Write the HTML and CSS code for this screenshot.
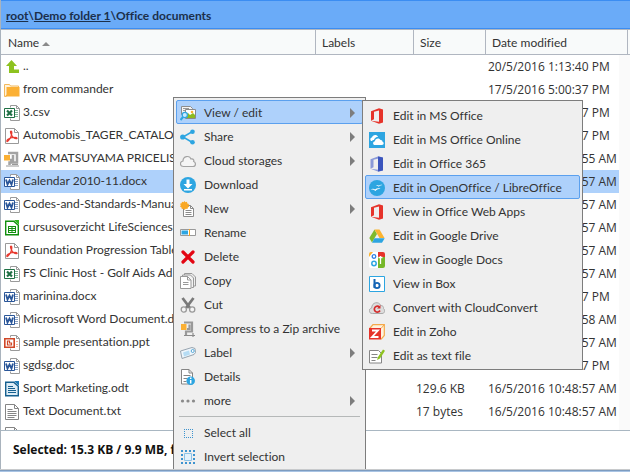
FILE: index.html
```
<!DOCTYPE html>
<html lang="en">
<head>
<meta charset="utf-8">
<title>Office documents</title>
<link rel="stylesheet" href="styles.css">
</head>
<body>
<svg class="sprite" aria-hidden="true">
  <defs>
    <g id="sheet"><path d="M6.5 2.500V.5h6l3 3v12h-9v-2" fill="#fff" stroke="#9a9a9a"/><path d="M12.500.5v3h3" fill="none" stroke="#9a9a9a"/></g>
    <symbol id="up" viewBox="0 0 16 16"><path d="M7.500 1 13 7H10v3.500h5V14H5V7H2z" fill="#8dc21f"/></symbol>
    <symbol id="folder" viewBox="0 0 16 16"><path d="M.5 14V2.500h5l1 1.500h8v2" fill="#fff3dc" stroke="#f3b85a"/><path d="M2.500 5h13v9.500H.8l1.700-2z" fill="#fbb034"/><path d="M.5 5v9.500h2" fill="none" stroke="#f3b85a"/></symbol>
    <symbol id="excel" viewBox="0 0 16 16"><use href="#sheet"/><path d="M11 5.500h3M11 7.500h3M11 9.500h3M11 11.500h3" stroke="#7fb596"/><path d="M.5 3.500h10v9H.5z" fill="#fff" stroke="#1f7145"/><path d="m3 5.500 5 5m0-5-5 5" stroke="#1f7145" stroke-width="2.200"/></symbol>
    <symbol id="word" viewBox="0 0 16 16"><use href="#sheet"/><path d="M11 5.500h3M11 7.500h3M11 9.500h3M11 11.500h3" stroke="#8aa0c0"/><path d="M.5 3.500h10v9H.5z" fill="#fff" stroke="#2a5699"/><path d="m2 5.500 1.500 5 2-4 2 4 1.500-5" fill="none" stroke="#2a5699" stroke-width="1.800"/></symbol>
    <symbol id="ppt" viewBox="0 0 16 16"><use href="#sheet"/><path d="M12 6.500h2M12 9.500h2M12 11.500h2" stroke="#f0b49c"/><path d="M.8 3.800h9.400v8.400H.8z" fill="#fff" stroke="#d04727" stroke-width="1.600"/><path d="M5.500 6h-2v4h4V8h-2z" fill="none" stroke="#d04727" stroke-width="1.200"/></symbol>
    <symbol id="pdf" viewBox="0 0 16 16"><path d="M1.500.5h9l4 4v11h-13z" fill="#fff" stroke="#999"/><path d="M10.500.5v4h4" fill="none" stroke="#999"/><path d="M7 3c-1.500 0 .5 5 2.500 6.500s4 1.500 3.500.5-5-.5-7.500.5S2.500 13 3 13.500 6 11 7 8.500 8.200 3 7 3z" fill="none" stroke="#e8392e" stroke-width="1.200"/></symbol>
    <symbol id="zip" viewBox="0 0 16 16"><path d="M4 2h9v9.500H5.500V14M9 4v5H6" fill="none" stroke="#a3a3a3" stroke-width="2.500"/><path d="M2 15h13M8 13.500h6" stroke="#999" stroke-width="1.200"/><path d="M0 4h6v5.500H0z" fill="#fbb034"/></symbol>
    <symbol id="calc" viewBox="0 0 16 16"><path d="M1.700 1.200h8l4.600 4v9.600H1.700z" fill="#fff" stroke="#12900f" stroke-width="1.400"/><path d="M10 0h5v5z" fill="#31b51f"/><path d="M4 6h8v7H4z" fill="#12900f"/><path d="M5 7.500h2.500M8.500 7.500H11M5 9.500h2.500m1 0H11M5 11.500h2.500m1 0H11" stroke="#fff"/></symbol>
    <symbol id="odt" viewBox="0 0 16 16"><path d="M1.700 1.200h8l4.600 4v9.600H1.700z" fill="#dcecf6" stroke="#16608f" stroke-width="1.400"/><path d="M10 0h5v5z" fill="#1e7ab4"/><path d="M4 5.500h5M4 7.500h7M4 9.500h8M4 11.500h8" stroke="#16608f"/></symbol>
    <symbol id="txt" viewBox="0 0 16 16"><path d="M1.500.5h9l4 4v11h-13z" fill="#fff" stroke="#858585"/><path d="M10.500.5v4h4M3.500 5.500h5M3.500 7.500h9M3.500 9.500h9M3.500 11.500h9M3.500 13.500h7" fill="none" stroke="#858585"/></symbol>

    <symbol id="view" viewBox="0 0 16 16"><path d="M1.500 1.500h9l2 2v6h-11z" fill="#f5f5f5" stroke="#8d8d8d"/><path d="M3 3.500h6M3 5.500h2" stroke="#999"/><path d="M5.500 4.500h10v9h-10z" fill="#fff" stroke="#8a8a8a"/><path d="M6 13V9l2-1 2 2 3-2 2 2v3z" fill="#8cbb1e"/><circle cx="12" cy="7" r="1.300" fill="#f9b233"/><circle cx="4.800" cy="10" r="2.600" fill="#c9eaff" stroke="#2da5e1" stroke-width="1.200"/><path d="m.5 15 2.500-3" stroke="#2da5e1" stroke-width="2"/></symbol>
    <symbol id="share" viewBox="0 0 16 16"><path d="M12.500 2.500 3 8l9.500 5.500" fill="none" stroke="#2da5e1" stroke-width="1.500"/><circle cx="12.500" cy="2.700" r="2.300" fill="#2da5e1"/><circle cx="2.700" cy="8" r="2.600" fill="#2da5e1"/><circle cx="12.500" cy="13.300" r="2.300" fill="#2da5e1"/></symbol>
    <symbol id="cloud" viewBox="0 0 16 16"><path d="M3.500 13.500C-.5 13.500-.5 8.500 3 8c0-5 6.500-6 8-2 3-.5 3 2 2.700 2.500 2.500 1 2.300 5-.7 5z" fill="#f5f5f5" stroke="#a3a3a3" stroke-width="1.200"/></symbol>
    <symbol id="download" viewBox="0 0 16 16"><circle cx="8" cy="8" r="8" fill="#2da5e1"/><path d="M6.500 2.500h3V7h3L8 11.500 3.500 7h3zM4 12h8v1.500H4z" fill="#fff"/></symbol>
    <symbol id="new" viewBox="0 0 16 16"><path d="M3.500 4.500h7l3 3v8h-10z" fill="#fff" stroke="#8a8a8a"/><path d="M10.500 4.500v3h3M5.500 9.500h6M5.500 11.500h6M5.500 13.500h6" fill="none" stroke="#8a8a8a"/><path d="m4.500 0 1 1.300L7 .8l.3 1.700 1.700.5-.6 1.500 1 1.200-1.600.8L7.500 8l-1.700-.3L4.500 9l-1-1.300L1.800 8l-.3-1.600L0 5.600l.8-1.400L0 2.800l1.600-.5L2 .8l1.500.5z" fill="#f9a825"/></symbol>
    <symbol id="rename" viewBox="0 0 16 16"><path d="M.5 4.500h15v6H.5z" fill="#fff" stroke="#999"/><path d="M1.500 5.500H8v4H1.500z" fill="#2da5e1"/><path d="M9.500 4v7" stroke="#f5a623"/></symbol>
    <symbol id="delete" viewBox="0 0 16 16"><path d="m3 3 10 10M13 3 3 13" stroke="#e30613" stroke-width="3.200" stroke-linecap="round"/></symbol>
    <symbol id="copy" viewBox="0 0 16 16"><path d="M4.500 3V.5H12l3.500 3.500v9h-2" fill="#eee" stroke="#999"/><path d="M2.500 4V2h8l3 3v9.500h-2" fill="#f3f3f3" stroke="#999"/><path d="M.5 3.500h7l3.500 3.500v8.500H.5z" fill="#fff" stroke="#999"/><path d="M7.500 3.500V7H11M3 9.500h5.500M3 11.500h5.500" fill="none" stroke="#999"/></symbol>
    <symbol id="cut" viewBox="0 0 16 16"><path d="m2.500 1 7.500 10M13.500 1 6 11" stroke="#7a7a7a" stroke-width="2.800"/><circle cx="3.800" cy="12.500" r="2.600" fill="#f5f5f5" stroke="#999" stroke-width="1.300"/><circle cx="12.200" cy="12.500" r="2.600" fill="#f5f5f5" stroke="#999" stroke-width="1.300"/></symbol>
    <symbol id="compress" viewBox="0 0 16 16"><path d="M4 1.500h8v9H6V14M9.500 3.500V8H7" fill="none" stroke="#999" stroke-width="2.200"/><path d="M4 14.500h11M13 12v4" stroke="#8a8a8a" stroke-width="1.200"/><path d="M1 3h5.500v6H1z" fill="#fbb034"/></symbol>
    <symbol id="label" viewBox="0 0 16 16"><path d="M.5 6 12 2.500l3 1 .5 4-1.500 2L2 13.500z" fill="#eef6fc" stroke="#97a4af"/><path d="m3 7.500 6-2 1 4-6 2z" fill="#b5dcf4"/><circle cx="12.700" cy="6" r="1.500" fill="#fff" stroke="#58a9d8"/></symbol>
    <symbol id="details" viewBox="0 0 16 16"><path d="M1.500.5H9L12.500 4v11h-11z" fill="#fff" stroke="#858585"/><path d="M9 .5V4h3.500M3.500 6.500h7M3.500 9.500h4M3.500 12.500h3" fill="none" stroke="#858585"/><circle cx="10.700" cy="11.700" r="4.300" fill="#2da5e1"/><path d="M10.700 8.500V10m0 1v3.500" stroke="#fff" stroke-width="1.500"/></symbol>
    <symbol id="more" viewBox="0 0 16 16"><circle cx="2.500" cy="8" r="1.600" fill="#8a8a8a"/><circle cx="8" cy="8" r="1.600" fill="#8a8a8a"/><circle cx="13.500" cy="8" r="1.600" fill="#8a8a8a"/></symbol>
    <symbol id="all" viewBox="0 0 16 16"><path d="M4 4.500h9M4 12.500h9M4.500 4v9M12.500 4v9" fill="none" stroke="#3d93cf" stroke-dasharray="1 1"/></symbol>
    <symbol id="invert" viewBox="0 0 16 16"><path d="M1 2h14M1 14h14M2 1v14M14 1v14" fill="none" stroke="#3d93cf" stroke-width="2" stroke-dasharray="2 2"/><path d="M4.500 4.500h7v7h-7z" fill="#e3f1fb" stroke="#8cc3e8"/></symbol>

    <symbol id="office" viewBox="0 0 16 16"><path d="m2 3.200 8-3L14 1.400v13.200L10 15.800l-8-3 8 1V2.400l-5 1.300v7.500l-3 1.500z" fill="#e6332a"/></symbol>
    <symbol id="office365" viewBox="0 0 16 16"><path d="m1.500 3.200 8-3 4 1.200v13.200l-4 1.200-8-3 8 1V2.400l-5 1.300v7.500l-3 1.500z" fill="#8b9ad8"/><path d="m9 .5 5 1v13l-5 1z" fill="#3b55bd"/></symbol>
    <symbol id="onedrive" viewBox="0 0 16 16"><path d="M0 0h16v16H0z" fill="#2da5e1"/><path d="M2 9C.5 7 2 5.500 3 5.500 3.500 2.500 8 2 9 5c-3 0-3.500 2-4 3-1.200 0-1.800.5-2 1z" fill="#fff"/><path d="M6 13c-2.500 0-2.500-3.500 0-3.800C6 6 10.500 5.500 11.500 8c2 0 2 1.500 2 1.800 1.800.7 1.500 3.200-.5 3.200z" fill="#fff"/></symbol>
    <symbol id="libre" viewBox="0 0 16 16"><circle cx="8" cy="8" r="8" fill="#2da5e1"/><path d="M7 5.500c1.500-1 2.300-.3 2.800.3 1-1 2.300-1.200 3.700-.8-1.700 0-2.800.8-3.700 1.800-.7-.9-1.500-1.300-2.800-1.300zM1.500 9.500c2-1.300 3.500-1 4.500 0 1.500-1.300 3.500-1.700 5.500-.8-2 0-3.700.8-5.200 2.300C5 9.700 3.500 9.300 1.500 9.500z" fill="#fff"/></symbol>
    <symbol id="drive" viewBox="0 0 16 16"><path d="m5.500 1.500 2.500 4.500-5 8.500L.3 10z" fill="#7fba2c"/><path d="M5.500 1.500h5l5 8.500h-5z" fill="#fcb42f"/><path d="M5.500 10.300h10.200L13 14.700H3z" fill="#2da5e1"/></symbol>
    <symbol id="gdocs" viewBox="0 0 16 16"><rect width="16" height="16" rx="2" fill="#fff"/><path d="M9 0h5a2 2 0 0 1 2 2v4H9z" fill="#e6332a"/><path d="M9 5h7v9a2 2 0 0 1-2 2H9z" fill="#76b729"/><path d="M0 4V2a2 2 0 0 1 2-2h2L0 5z" fill="#fcb42f"/><circle cx="5" cy="4.500" r="1.800" fill="none" stroke="#2d7fe1" stroke-width="1.300"/><circle cx="5" cy="11.500" r="2.200" fill="none" stroke="#2da5e1" stroke-width="1.500"/><path d="M11.500 4v8M9.500 5.500h4" stroke="#fff" stroke-width="1.300"/></symbol>
    <symbol id="box" viewBox="0 0 16 16"><path d="M.5.5h15v15H.5z" fill="#fff" stroke="#2da5e1"/><path d="M5.500 3v9" stroke="#1565b5" stroke-width="2"/><circle cx="8" cy="9.500" r="2.600" fill="none" stroke="#1565b5" stroke-width="1.900"/></symbol>
    <symbol id="convert" viewBox="0 0 16 16"><path d="M3.500 13.500c-4.500 0-4-5-.8-5.500 0-6 7.300-7 9-2.500 3 0 3 2.500 2.800 3 1.800 1.500 1.500 5-1.500 5z" fill="#ddd" stroke="#aaa"/><path d="M10.500 7A3 3 0 1 0 11 10.500" fill="none" stroke="#d42b2b" stroke-width="1.700"/><path d="M11.500 5v3.500H8z" fill="#d42b2b"/></symbol>
    <symbol id="zoho" viewBox="0 0 16 16"><path d="M.7 4.500 4 .7h11.300v10.800L12 15.300" fill="#fff3df" stroke="#f5a94a" stroke-width="1.200"/><path d="m12 4.500 3.300-3.800" stroke="#f5a94a"/><path d="M0 4h12v11.500H0z" fill="#e6332a"/><path d="M3 6.500h6l-6 6.500h6.500" fill="none" stroke="#fff" stroke-width="1.800"/></symbol>
    <symbol id="edit" viewBox="0 0 16 16"><path d="M.5 2.500h9l3 3v9.500H.5z" fill="#fff" stroke="#858585"/><path d="M2.500 6.500h6M2.500 9.500h6M2.500 12.500h4" stroke="#858585"/><path d="m8 12 1-3 5-7.500 2 1.300-5 7.700z" fill="#8dc21f"/></symbol>
  </defs>
</svg>

<div class="app">
  <main class="window">
    <nav class="path" aria-label="Path"><a href="#">root</a>\<a href="#">Demo folder 1</a>\Office documents</nav>

    <div class="list">
      <table class="files">
        <colgroup><col><col class="c-labels"><col class="c-size"><col class="c-date"><col class="c-scroll"><col class="c-edge"></colgroup>
        <thead>
          <tr><th>Name <span class="sort"></span></th><th>Labels</th><th>Size</th><th colspan="2">Date modified</th><th></th></tr>
        </thead>
        <tbody>
          <tr><td><svg><use href="#up"/></svg>..</td><td></td><td></td><td>20/5/2016 1:13:40 PM</td><td colspan="2"></td></tr>
          <tr><td><svg><use href="#folder"/></svg>from commander</td><td></td><td></td><td>17/5/2016 5:00:37 PM</td><td colspan="2"></td></tr>
          <tr><td><svg><use href="#excel"/></svg>3.csv</td><td></td><td></td><td>17/5/2016 5:00:37 PM</td><td colspan="2"></td></tr>
          <tr><td><svg><use href="#pdf"/></svg>Automobis_TAGER_CATALOG</td><td></td><td></td><td>17/5/2016 5:00:37 PM</td><td colspan="2"></td></tr>
          <tr><td><svg><use href="#zip"/></svg>AVR MATSUYAMA PRICELIST</td><td></td><td></td><td>16/5/2016 10:48:55 AM</td><td colspan="2"></td></tr>
          <tr class="selected"><td><svg><use href="#word"/></svg>Calendar 2010-11.docx</td><td></td><td></td><td>16/5/2016 10:48:57 AM</td><td colspan="2"></td></tr>
          <tr><td><svg><use href="#word"/></svg>Codes-and-Standards-Manual</td><td></td><td></td><td>16/5/2016 10:48:57 AM</td><td colspan="2"></td></tr>
          <tr><td><svg><use href="#calc"/></svg>cursusoverzicht LifeSciences</td><td></td><td></td><td>16/5/2016 10:48:57 AM</td><td colspan="2"></td></tr>
          <tr><td><svg><use href="#pdf"/></svg>Foundation Progression Table</td><td></td><td></td><td>16/5/2016 10:48:57 AM</td><td colspan="2"></td></tr>
          <tr><td><svg><use href="#excel"/></svg>FS Clinic Host - Golf Aids Ad</td><td></td><td></td><td>16/5/2016 10:48:57 AM</td><td colspan="2"></td></tr>
          <tr><td><svg><use href="#word"/></svg>marinina.docx</td><td></td><td></td><td>17/5/2016 5:00:37 PM</td><td colspan="2"></td></tr>
          <tr><td><svg><use href="#word"/></svg>Microsoft Word Document.docx</td><td></td><td></td><td>16/5/2016 10:48:58 AM</td><td colspan="2"></td></tr>
          <tr><td><svg><use href="#ppt"/></svg>sample presentation.ppt</td><td></td><td></td><td>16/5/2016 10:48:57 AM</td><td colspan="2"></td></tr>
          <tr><td><svg><use href="#word"/></svg>sgdsg.doc</td><td></td><td></td><td>17/5/2016 5:00:37 PM</td><td colspan="2"></td></tr>
          <tr><td><svg><use href="#odt"/></svg>Sport Marketing.odt</td><td></td><td>129.6 KB</td><td>16/5/2016 10:48:57 AM</td><td colspan="2"></td></tr>
          <tr><td><svg><use href="#txt"/></svg>Text Document.txt</td><td></td><td>17 bytes</td><td>16/5/2016 10:48:57 AM</td><td colspan="2"></td></tr>
          <tr><td><svg><use href="#txt"/></svg></td><td></td><td></td><td></td><td colspan="2"></td></tr>
        </tbody>
      </table>
    </div>

    <footer class="status">Selected: 15.3 KB / 9.9 MB, f</footer>

    <ul class="menu context">
      <li>
        <button class="item active parent"><svg><use href="#view"/></svg>View / edit</button>
        <ul class="menu sub">
          <li><button class="item"><svg><use href="#office"/></svg>Edit in MS Office</button></li>
          <li><button class="item"><svg><use href="#onedrive"/></svg>Edit in MS Office Online</button></li>
          <li><button class="item"><svg><use href="#office365"/></svg>Edit in Office 365</button></li>
          <li><button class="item active"><svg><use href="#libre"/></svg>Edit in OpenOffice / LibreOffice</button></li>
          <li><button class="item"><svg><use href="#office"/></svg>View in Office Web Apps</button></li>
          <li><button class="item"><svg><use href="#drive"/></svg>Edit in Google Drive</button></li>
          <li><button class="item"><svg><use href="#gdocs"/></svg>View in Google Docs</button></li>
          <li><button class="item"><svg><use href="#box"/></svg>View in Box</button></li>
          <li><button class="item"><svg><use href="#convert"/></svg>Convert with CloudConvert</button></li>
          <li><button class="item"><svg><use href="#zoho"/></svg>Edit in Zoho</button></li>
          <li><button class="item"><svg><use href="#edit"/></svg>Edit as text file</button></li>
        </ul>
      </li>
      <li><button class="item parent"><svg><use href="#share"/></svg>Share</button></li>
      <li><button class="item parent"><svg><use href="#cloud"/></svg>Cloud storages</button></li>
      <li><button class="item"><svg><use href="#download"/></svg>Download</button></li>
      <li><button class="item parent"><svg><use href="#new"/></svg>New</button></li>
      <li><button class="item"><svg><use href="#rename"/></svg>Rename</button></li>
      <li><button class="item"><svg><use href="#delete"/></svg>Delete</button></li>
      <li><button class="item"><svg><use href="#copy"/></svg>Copy</button></li>
      <li><button class="item"><svg><use href="#cut"/></svg>Cut</button></li>
      <li><button class="item"><svg><use href="#compress"/></svg>Compress to a Zip archive</button></li>
      <li><button class="item parent"><svg><use href="#label"/></svg>Label</button></li>
      <li><button class="item"><svg><use href="#details"/></svg>Details</button></li>
      <li><button class="item parent"><svg><use href="#more"/></svg>more</button></li>
      <li class="separator" role="separator"></li>
      <li><button class="item"><svg><use href="#all"/></svg>Select all</button></li>
      <li><button class="item"><svg><use href="#invert"/></svg>Invert selection</button></li>
    </ul>
  </main>
  <div class="frame-edge"></div>
</div>
</body>
</html>
```
FILE: styles.css
```
* { box-sizing: border-box; }

body {
  margin: 0;
  color: #333;
  font: 12px/16px Lato, "Open Sans", sans-serif;
  font-variant-ligatures: none;
}

.sprite { position: absolute; width: 0; height: 0; }

svg { flex: none; width: 16px; height: 16px; }

.app { display: flex; flex-direction: column; height: 100vh; }

.window {
  position: relative;
  display: flex;
  flex: 1;
  flex-direction: column;
  min-height: 0;
  overflow: hidden;
  border-left: 1px solid #a9b3bd;
  background: #fff;
}

.frame-edge {
  height: 3px;
  border-top: 1px solid #c8cacc;
  background: linear-gradient(#7d9cc0 50%, #a9c4e4 50%);
}

/* Path bar */
.path {
  flex: none;
  padding: 7px 5px 5px;
  border: solid #3b8df2;
  border-width: 1px 0;
  background: #6aabf8;
  color: #1b2f4b;
  font-weight: bold;
  line-height: 15px;
}
.path a { color: inherit; }

/* File list */
.list {
  flex: 1;
  min-height: 0;
  overflow: hidden;
  border-bottom: 1px solid #a9b7c2;
}

.files {
  width: 100%;
  table-layout: fixed;
  border-spacing: 0;
}
.c-labels { width: 98px; }
.c-size { width: 72px; }
.c-date { width: 133px; }
.c-scroll { width: 9px; }
.c-edge { width: 2px; }

.files th {
  height: 26px;
  padding: 2px 6px 0;
  border: solid #b0b6c0;
  border-width: 1px 1px 1px 0;
  background: #f8fafa;
  font-weight: normal;
  text-align: left;
}
.files th:first-child { padding-left: 7px; }
.files th:last-child { padding: 0; border-right: 0; }

.files td {
  height: 23px;
  padding: 0 2px;
  font-family: "Open Sans", sans-serif;
  white-space: nowrap;
}
.files td:first-child { padding-left: 3px; font-family: inherit; }
.files td:last-child { background: #fafafa; }
.files td svg { margin-right: 3px; vertical-align: middle; }
.files .selected td:not(:last-child) { background: #aed1fb; }

.sort {
  display: inline-block;
  border: solid transparent;
  border-width: 0 4px 4px;
  border-bottom-color: #8a8a8a;
  vertical-align: middle;
}

.status {
  flex: none;
  padding: 11px 12px;
  color: #111;
  font-family: "Open Sans", sans-serif;
  font-weight: bold;
}

/* Menus */
.menu {
  position: absolute;
  margin: 0;
  padding: 2px;
  border: 1px solid #7d7d7d;
  background: #efefef;
  list-style: none;
}
.menu li { position: relative; }
.context { top: 97px; left: 172px; min-width: 193px; }
.sub { z-index: 1; top: 0; left: 100%; min-width: 221px; margin-left: -1px; }

.item {
  display: flex;
  align-items: center;
  gap: 8px;
  width: 100%;
  height: 24px;
  padding: 1px 7px 0 3px;
  border: 1px solid transparent;
  border-radius: 2px;
  background: none;
  color: inherit;
  font: inherit;
  white-space: nowrap;
}
.item.active { border-color: #5ba0ee; background: #aed1fb; }

.parent::after {
  margin-left: auto;
  border: solid transparent;
  border-width: 5px 0 5px 5px;
  border-left-color: #7d7d7d;
  content: "";
}

.separator {
  height: 1px;
  margin: 4px 3px 3px;
  background: #b5b8b8;
}
```
